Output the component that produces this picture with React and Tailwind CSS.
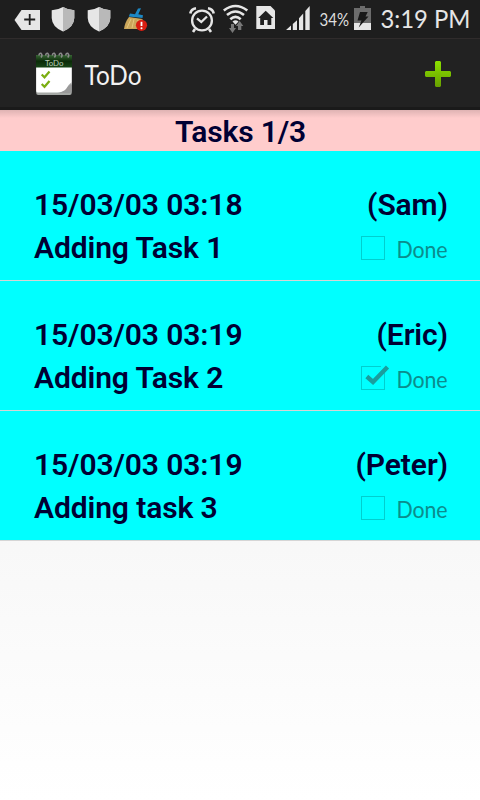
import React from "react";

const tasks = [
  { date: "15/03/03 03:18", who: "(Sam)", title: "Adding Task 1", done: false },
  { date: "15/03/03 03:19", who: "(Eric)", title: "Adding Task 2", done: true },
  { date: "15/03/03 03:19", who: "(Peter)", title: "Adding task 3", done: false },
];

function Shield() {
  return (
    <svg className="h-[38px] w-6 shrink-0" viewBox="0 0 24 38">
      <path d="M12 7 Q17 10 23.3 10.3 V18 Q23 27 12 31.5 Q1 27 0.7 18 V10.3 Q7 10 12 7Z" fill="#e6e6e6" />
      <path d="M12 7 Q17 10 23.3 10.3 V18 Q23 27 12 31.5Z" fill="#b9b9b9" />
    </svg>
  );
}

function StatusBar() {
  return (
    <div className="flex h-[38px] items-start bg-[#1e1e1e] pl-[14px] text-[#e6e6e6]">
      <svg className="h-[38px] w-[27px] shrink-0" viewBox="14 0 27 38">
        <path d="M14.5 20 L21.5 10 H40 V30 H21.5Z" fill="#e6e6e6" />
        <path d="M29.7 14 V25 M24.2 19.5 H35.2" stroke="#1e1e1e" strokeWidth="1.8" />
      </svg>
      <div className="ml-[10px] flex gap-3">
        <Shield />
        <Shield />
      </div>
      <svg className="ml-3 h-[38px] w-[25px] shrink-0" viewBox="123 0 25 38">
        <path d="M129 17 L142.5 19 V25 L140 29 H124 Q125 22 129 17Z" fill="#cba65a" />
        <path d="M127 28 L131 19 M132 28 L134 19 M137 27 L138 20" stroke="#e4c77e" strokeWidth="1" />
        <path d="M130 13.5 L135 14.2 L138 8.5 L141 8.3 L138.3 14.3 L143 15.2 L142.5 18 L128.8 16.5Z" fill="#1c88c4" />
        <circle cx="141.5" cy="25.3" r="5.6" fill="#d91e12" />
        <path d="M141.5 21.8 V26" stroke="#fff" strokeWidth="1.8" />
        <circle cx="141.5" cy="28.3" r="1" fill="#fff" />
      </svg>
      <svg className="ml-[41px] h-[38px] w-[27px] shrink-0" viewBox="189 0 27 38" fill="none" stroke="#e6e6e6">
        <circle cx="202" cy="20.5" r="9.9" strokeWidth="2.3" />
        <path d="M197 18.3 L201.3 22 L207 16.5" strokeWidth="2.3" />
        <path d="M190.3 13.5 Q191 9 196 8.2 M213.7 13.5 Q213 9 208 8.2" strokeWidth="2.6" />
        <path d="M195 29 L193 32 M209 29 L211 32" strokeWidth="2.6" />
      </svg>
      <svg className="ml-[7px] h-[38px] w-[26px] shrink-0" viewBox="223 0 26 38" fill="none">
        <path d="M223.8 10.5 Q235.5 1.5 247.3 10.5 M227 15 Q235.5 8 244 15 M230.3 19.2 Q235.5 14.5 240.7 19.2" stroke="#e6e6e6" strokeWidth="2.6" />
        <path d="M232.5 21.5 Q235.5 19 238.5 21.5 L235.5 24.8Z" fill="#e6e6e6" />
        <path d="M231 24 H234 V28 H236 L232.5 33 L229 28 H231Z M238 30 V26 H236 L239.7 21 L243.3 26 H241.3 V30Z" fill="#777" />
      </svg>
      <svg className="ml-[7px] h-[38px] w-5 shrink-0" viewBox="256 0 20 38">
        <path d="M256.3 6 H270.5 L275 10.5 V29 H256.3Z" fill="#e6e6e6" />
        <path d="M265.7 10.8 L273.3 18 H271.3 V25 H267.5 V20 H264 V25 H260.2 V18 H258.2Z" fill="#1e1e1e" />
      </svg>
      <svg className="ml-[10px] h-[38px] w-6 shrink-0" viewBox="286 0 24 38" fill="#e6e6e6">
        <path d="M286 30 L291 25.5 V30Z M292.8 24 L297 20.3 V30 H292.8Z M299 18.3 L303.2 13.5 V30 H299Z M305.3 11 L309.7 6 V30 H305.3Z" />
      </svg>
      <svg className="ml-2 h-[38px] w-8 shrink-0 overflow-visible" viewBox="318 0 32 38">
        <text x="319.5" y="26" textLength="29.5" lengthAdjust="spacingAndGlyphs" className="fill-[#dedede] font-[Lato] text-[17.5px]">34%</text>
      </svg>
      <svg className="ml-1 h-[38px] w-[18px] shrink-0" viewBox="354 0 18 38">
        <path d="M360 6 H365 V8 H371 V30 H354 V8 H360Z" fill="#6c6c6c" />
        <path d="M354 23 H371 V30 H354Z" fill="#e6e6e6" />
        <path d="M360 12 H367.7 L365.5 16.5 H368.5 L358.7 27.5 L361.5 20.5 H357.5Z" fill="#181818" />
      </svg>
      <svg className="ml-2 h-[38px] w-[92px] shrink-0 overflow-visible" viewBox="380 0 92 38">
        <text x="380.5" y="27.5" textLength="90" lengthAdjust="spacingAndGlyphs" className="fill-[#e6e6e6] font-[Lato] text-[25.5px]">3:19 PM</text>
      </svg>
    </div>
  );
}

function ActionBar() {
  return (
    <div className="flex h-[72px] items-start border-t border-[#302c2c] border-b-[3px] border-b-[#1a1a1a] bg-[#222] pl-9">
      <svg className="mt-[13px] h-[43px] w-9 shrink-0" viewBox="36 52 36 43">
        <defs>
          <linearGradient id="cover" x1="0" y1="0" x2="0" y2="1">
            <stop offset="0" stopColor="#386635" />
            <stop offset="0.5" stopColor="#0b2b08" />
            <stop offset="1" stopColor="#174516" />
          </linearGradient>
          <linearGradient id="curl" x1="0" y1="0" x2="1" y2="1">
            <stop offset="0.3" stopColor="#eee" />
            <stop offset="0.6" stopColor="#999" />
          </linearGradient>
        </defs>
        <rect x="36.2" y="66" width="35.5" height="29" rx="2" fill="#a5a8a5" />
        <path d="M36.2 67 H71.7 V84 Q68 92 59 92.5 H38 Q36.2 92.5 36.2 91Z" fill="#fff" />
        <path d="M71.7 82 Q69 84 66 89 Q63 92 57 93 H70 Q71.7 93 71.7 91Z" fill="url(#curl)" />
        <rect x="36" y="55" width="36" height="12.5" fill="url(#cover)" />
        <g fill="none" stroke="#8a8a8a" strokeWidth="1.5">
          <path d="M39 55.5 Q39 53 41 53.3 Q43 55 41 57.5" />
          <path d="M45.7 55.5 Q45.7 53 47.7 53.3 Q49.7 55 47.7 57.5" />
          <path d="M52.4 55.5 Q52.4 53 54.4 53.3 Q56.4 55 54.4 57.5" />
          <path d="M59.1 55.5 Q59.1 53 61.1 53.3 Q63.1 55 61.1 57.5" />
          <path d="M65.8 55.5 Q65.8 53 67.8 53.3 Q69.8 55 67.8 57.5" />
        </g>
        <text x="45" y="65.6" textLength="18.5" lengthAdjust="spacingAndGlyphs" className="fill-[#b9ccb7] font-[Lato] text-[7px]">ToDo</text>
        <path d="M41.7 74.5 L44.5 77.3 L49.5 71.5 M41.7 84 L44.5 86.8 L49.5 81" fill="none" stroke="#7bae12" strokeWidth="2.2" />
      </svg>
      <svg className="ml-2 h-[68px] w-[66px] shrink-0 overflow-visible" viewBox="80 39 66 68">
        <text x="84.5" y="85" textLength="57" lengthAdjust="spacingAndGlyphs" className="fill-[#f2f2f2] font-[Lato] text-[26px]">ToDo</text>
      </svg>
      <svg className="ml-auto mr-[28px] mt-[21px] h-[28px] w-7 shrink-0" viewBox="424 60 28 28">
        <defs>
          <linearGradient id="plus" x1="0" y1="0" x2="0" y2="1">
            <stop offset="0" stopColor="#8be000" />
            <stop offset="1" stopColor="#68a000" />
          </linearGradient>
        </defs>
        <path d="M436 61 H440 L441 62 V71 H450 L451 72 V76 L450 77 H441 V86 L440 87 H436 L435 86 V77 H426 L425 76 V72 L426 71 H435 V62Z" fill="url(#plus)" />
      </svg>
    </div>
  );
}

function TaskRow({ task }) {
  return (
    <div className="flex h-[130px] justify-between border-b border-[#d5d5d5] bg-[#00ffff] pl-[34px] pr-8 pt-8 font-[Roboto] text-[30px] font-semibold leading-[43px] tracking-[-0.1px] text-[#000033]">
      <div className="whitespace-nowrap">
        <div>{task.date}</div>
        <div>{task.title}</div>
      </div>
      <div className="text-right">
        <div>{task.who}</div>
        <svg className="ml-auto h-[43px] w-[88px] overflow-visible" viewBox="360 226 88 43">
          <rect x="361.5" y="236.5" width="23" height="23" fill="none" stroke="#00cfcf" />
          {task.done && (
            <g fill="none">
              <path d="M381 236.5 H386 M384.5 235 V241" stroke="#00ffff" strokeWidth="2" />
              <path d="M366.8 246.5 L373 252 L387.5 237" stroke="#1a9d9d" strokeWidth="4.4" />
            </g>
          )}
          <text x="396.5" y="257.5" textLength="51" lengthAdjust="spacingAndGlyphs" className="fill-[#0b8d8d] font-[Lato] text-[22.5px] font-normal">Done</text>
        </svg>
      </div>
    </div>
  );
}

export default function App() {
  return (
    <div className="flex h-[800px] w-[480px] flex-col overflow-hidden bg-gradient-to-b from-[#e9e9e9] to-white font-[Lato]">
      <StatusBar />
      <ActionBar />
      <div className="h-[41px] bg-[#ffcccc] bg-gradient-to-b from-[#dfb3b3] to-[#ffcccc] to-[8px] pl-px text-center font-[Roboto] text-[30px] font-semibold leading-[44px] tracking-[-0.15px] text-[#000033]">
        Tasks 1/3
      </div>
      {tasks.map((task) => (
        <TaskRow key={task.title} task={task} />
      ))}
    </div>
  );
}
